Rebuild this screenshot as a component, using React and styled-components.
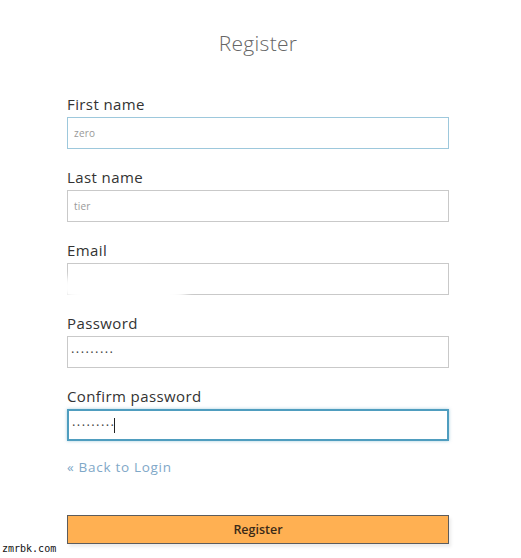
import React from 'react';
import styled, { createGlobalStyle } from 'styled-components';

const GlobalStyle = createGlobalStyle`
  body {
    margin: 0;
    background: #fff;
    font-family: "Open Sans", "Liberation Sans", sans-serif;
  }
`;

const Page = styled.div`
  position: relative;
  width: 521px;
  height: 558px;
  overflow: hidden;
  background: #fff;
`;

const Form = styled.div`
  width: 382px;
  margin-left: 67px;
  padding-top: 31px;
  display: flex;
  flex-direction: column;
`;

const Title = styled.h1`
  margin: 0 0 40px;
  font-size: 21px;
  line-height: 24px;
  font-weight: 300;
  color: #666;
  text-align: center;
  letter-spacing: 0.3px;
`;

const FieldGroup = styled.div`
  position: relative;
  display: flex;
  flex-direction: column;
  gap: 4px;
  margin-bottom: 19px;

  &:last-of-type {
    margin-bottom: 17px;
  }
`;

const Label = styled.label`
  font-size: 15px;
  line-height: 18px;
  font-weight: 500;
  color: #333;
  letter-spacing: 0.4px;
`;

const Input = styled.div`
  box-sizing: border-box;
  height: 32px;
  display: flex;
  align-items: center;
  padding: 0 ${p => (p.$secret ? '3px' : '6px')};
  border: ${p => (p.$focus ? '2px solid #4f9dbf' : p.$hover ? '1px solid #9dc8dc' : '1px solid #c9c9c9')};
  box-shadow: ${p => (p.$focus ? '0 0 3px rgba(79, 157, 191, 0.5)' : 'none')};
  font-size: ${p => (p.$secret ? '13px' : '10px')};
  letter-spacing: ${p => (p.$secret ? '1.4px' : '0.2px')};
  color: ${p => (p.$secret ? '#444' : '#999')};
  background: #fff;
`;

const Caret = styled.span`
  display: inline-block;
  width: 1px;
  height: 15px;
  margin-left: -1px;
  background: #222;
`;

const Smudge = styled.div`
  position: absolute;
  left: -6px;
  top: 27px;
  width: 128px;
  height: 38px;
  border-radius: 45%;
  background: #fff;
  filter: blur(3px);
`;

const BackLink = styled.a`
  font-size: 13.5px;
  line-height: 18px;
  color: #7fa8c8;
  text-decoration: none;
  margin-bottom: 39px;
  letter-spacing: 0.7px;
`;

const SubmitButton = styled.button`
  height: 29px;
  border: 1px solid #5c5c5c;
  background: #ffb052;
  color: #3b2a18;
  font-family: "Open Sans", "Liberation Sans", sans-serif;
  font-size: 12.5px;
  font-weight: 600;
  box-shadow: 2px 3px 3px rgba(0, 0, 0, 0.08);
  cursor: pointer;
`;

const Watermark = styled.span`
  position: absolute;
  left: 2px;
  top: 543px;
  font-family: "DejaVu Sans Mono", "Liberation Mono", monospace;
  font-size: 10px;
  color: #111;
`;

const fields = [
  { label: 'First name', value: 'zero', hover: true },
  { label: 'Last name', value: 'tier' },
  { label: 'Email', value: '', smudge: true },
  { label: 'Password', value: '·········', secret: true },
  { label: 'Confirm password', value: '·········', secret: true, focus: true },
];

const App = () => {
  return (
    <Page>
      <GlobalStyle />
      <Form>
        <Title>Register</Title>
        {fields.map(f => (
          <FieldGroup key={f.label}>
            <Label>{f.label}</Label>
            <Input $hover={f.hover} $focus={f.focus} $secret={f.secret}>
              {f.value}
              {f.focus && <Caret />}
            </Input>
            {f.smudge && <Smudge />}
          </FieldGroup>
        ))}
        <BackLink href="#">« Back to Login</BackLink>
        <SubmitButton>Register</SubmitButton>
      </Form>
      <Watermark>zmrbk.com</Watermark>
    </Page>
  );
};

export default App;
